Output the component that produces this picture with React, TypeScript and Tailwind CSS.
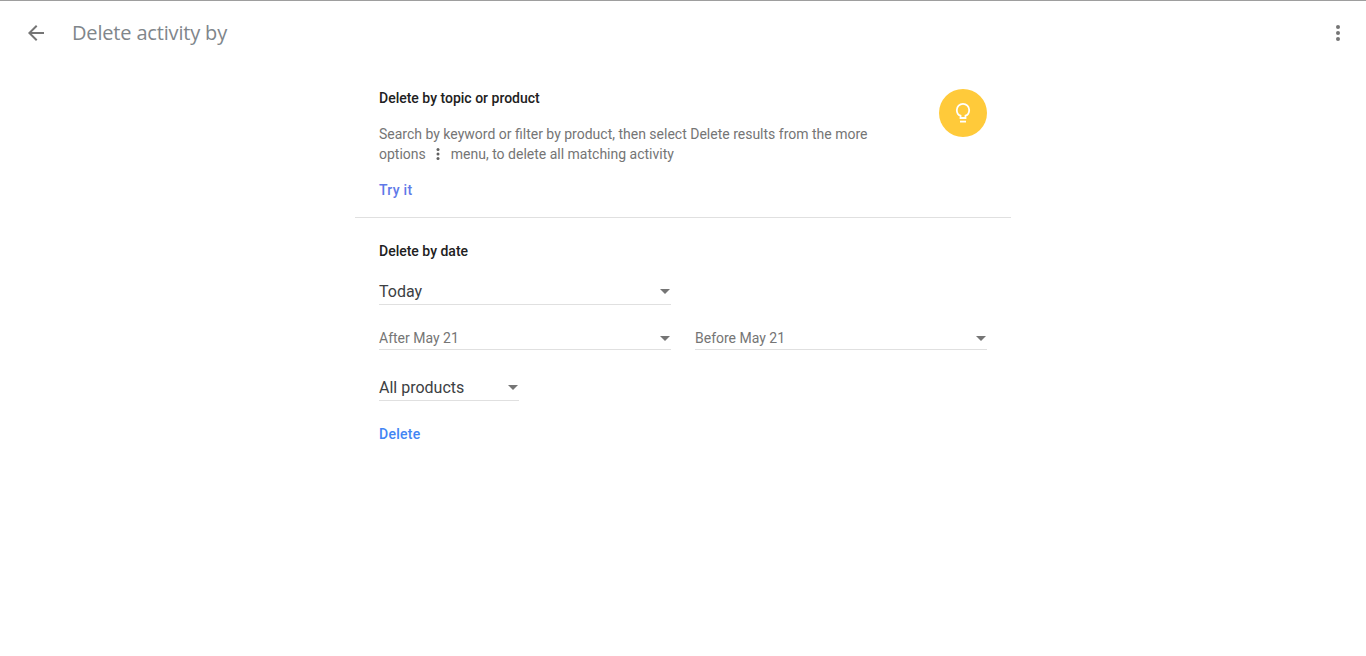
const Caret = () => (
  <svg width="10" height="5" viewBox="0 0 10 5" className="shrink-0">
    <path d="M0 0h10L5 5z" fill="#757575" />
  </svg>
)

const Select = ({ label, small = false, className = '' }: { label: string; small?: boolean; className?: string }) => (
  <div className={`flex items-center justify-between border-b border-[#e0e0e0] pr-[1px] ${className}`}>
    <span className={small ? 'text-[14px] leading-[20px] text-[#757575]' : 'text-[16px] leading-[24px] text-[#3c4043]'}>
      {label}
    </span>
    <Caret />
  </div>
)

export default function App() {
  return (
    <div className="min-h-[656px] bg-white font-['Roboto',sans-serif]">
      <div className="h-px bg-[#9e9e9e]" />
      <header className="flex h-[64px] items-center pl-[24px] pr-[16px]">
        <svg width="24" height="24" viewBox="0 0 24 24" className="mr-[24px] shrink-0">
          <path d="M20 11H7.83l5.59-5.59L12 4l-8 8 8 8 1.41-1.41L7.83 13H20v-2z" fill="#757575" />
        </svg>
        <h1 className="font-['Open_Sans',sans-serif] text-[20px] leading-[28px] tracking-[-0.17px] text-[#80868b]">Delete activity by</h1>
        <svg width="24" height="24" viewBox="0 0 24 24" className="ml-auto shrink-0">
          <circle cx="12" cy="6" r="2" fill="#757575" />
          <circle cx="12" cy="12" r="2" fill="#757575" />
          <circle cx="12" cy="18" r="2" fill="#757575" />
        </svg>
      </header>

      <main className="mx-auto w-[656px]">
        <section className="border-b border-[#e0e0e0] px-[24px] pb-[17px] pt-[23px]">
          <div className="flex justify-between">
            <div className="w-[500px]">
              <h2 className="text-[14px] font-medium leading-[20px] text-[#212121]">Delete by topic or product</h2>
              <p className="mt-[16px] text-[14px] leading-[20px] text-[#757575]">
                Search by keyword or filter by product, then select Delete results from the more options
                <svg width="16" height="16" viewBox="0 0 16 16" className="ml-[4px] mr-[5px] inline-block align-[-3px]">
                  <circle cx="8" cy="3.5" r="1.5" fill="#616161" />
                  <circle cx="8" cy="8" r="1.5" fill="#616161" />
                  <circle cx="8" cy="12.5" r="1.5" fill="#616161" />
                </svg>
                menu, to delete all matching activity
              </p>
            </div>
            <div className="mt-[1px] flex size-[48px] items-center justify-center rounded-full bg-[#ffca3a]">
              <svg width="24" height="24" viewBox="0 0 24 24" fill="none" stroke="#fff" strokeWidth="1.8">
                <path d="M9.5 17v-2.3C7 13.9 5.8 11.7 5.8 9a6.2 6.2 0 0 1 12.4 0c0 2.7-1.2 4.9-3.7 5.7V17z" />
                <path d="M9 20.6h6" />
              </svg>
            </div>
          </div>
          <a className="mt-[16px] block text-[14px] font-medium leading-[20px] tracking-[0.02em] text-[#5f79e8]">Try it</a>
        </section>

        <section className="px-[24px] pt-[23px]">
          <h2 className="text-[14px] font-medium leading-[20px] text-[#212121]">Delete by date</h2>
          <Select label="Today" className="mt-[18px] h-[26px] w-[292px]" />
          <div className="mt-[23px] flex gap-[24px]">
            <Select label="After May 21" small className="h-[22px] w-[292px] pb-px" />
            <Select label="Before May 21" small className="h-[22px] w-[292px] pb-px" />
          </div>
          <Select label="All products" className="mt-[25px] h-[26px] w-[140px]" />
          <a className="mt-[23px] block text-[14px] font-medium leading-[20px] tracking-[0.02em] text-[#4285f4]">Delete</a>
        </section>
      </main>
    </div>
  )
}
